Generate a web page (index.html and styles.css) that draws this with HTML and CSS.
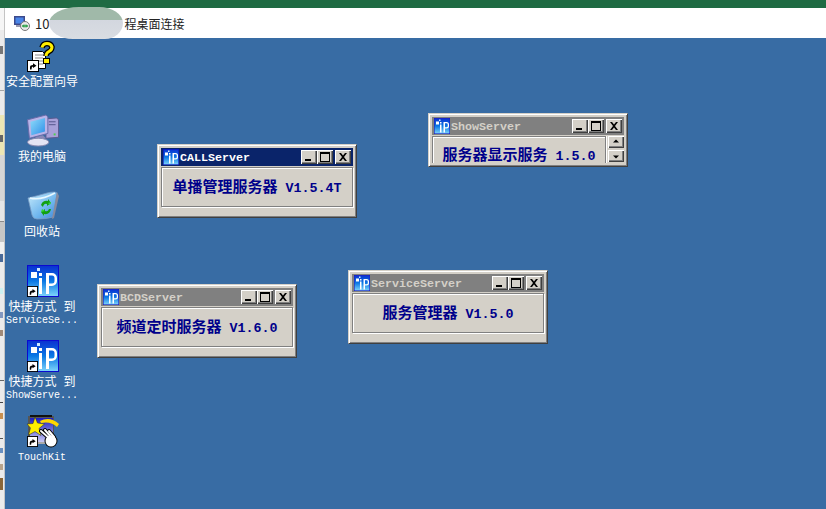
FILE: index.html
```html
<!DOCTYPE html>
<html lang="zh-CN">
<head>
<meta charset="utf-8">
<title>远程桌面连接</title>
<link rel="stylesheet" href="styles.css">
</head>
<body>
<svg class="defs" aria-hidden="true">
  <defs>
    <linearGradient id="ipg" x1="0" y1="0" x2="0" y2="1">
      <stop offset="0" stop-color="#0a30d0"/><stop offset=".5" stop-color="#0a78e4"/><stop offset="1" stop-color="#7fd6fb"/>
    </linearGradient>
    <linearGradient id="scr" x1="0" y1="0" x2="1" y2="1">
      <stop offset="0" stop-color="#8fdcfa"/><stop offset="1" stop-color="#2f8fe8"/>
    </linearGradient>
    <linearGradient id="bin" x1="0" y1="0" x2="1" y2="1">
      <stop offset="0" stop-color="#c9ecfb"/><stop offset=".6" stop-color="#6fb6ee"/><stop offset="1" stop-color="#3f86d6"/>
    </linearGradient>
    <linearGradient id="tk" x1="0" y1="0" x2="0" y2="1">
      <stop offset="0" stop-color="#1c1cc0"/><stop offset="1" stop-color="#c8c8f4"/>
    </linearGradient>
    <symbol id="ip" viewBox="0 0 32 32">
      <rect x=".5" y=".5" width="31" height="31" fill="url(#ipg)" stroke="#0a0ad0"/>
      <rect x="4" y="7" width="6" height="6" fill="#fff"/>
      <rect x="10" y="3" width="3" height="3" fill="#cfeaff"/>
      <rect x="12" y="8" width="3" height="3" fill="#fff"/>
      <rect x="12" y="13" width="3" height="16" fill="#fff"/>
      <path d="M19 8h6a5 5 0 0 1 5 5v3a5 5 0 0 1-5 5h-3v8h-3zM22 10.500v8h3a2.500 2.500 0 0 0 2.500-2.500v-3a2.500 2.500 0 0 0-2.500-2.500z" fill="#fff" fill-rule="evenodd"/>
    </symbol>
    <symbol id="lnk" viewBox="0 0 12 12">
      <rect x=".5" y=".5" width="11" height="11" fill="#fff" stroke="#000"/>
      <path d="M3 9.500 L3 7 Q3 5 6 5 L6 3.200 L9.500 5.800 L6 8 L6 6.600 Q4.500 6.600 4.500 9.500Z" fill="#000"/>
    </symbol>
  </defs>
</svg>

<header class="topstrip"></header>
<div class="main">
  <svg class="leftstrip" width="5" height="501" viewBox="0 0 5 501" aria-hidden="true">
    <rect width="5" height="501" fill="#ebebeb"/>
    <rect x="4" width="1" height="501" fill="#c4c4c4"/>
    <rect width="4" height="22" y="0" fill="#f6f6f6"/>
    <rect width="4" height="1" y="82" fill="#a6a6a6"/>
    <rect y="107" width="4" height="40" fill="#ece6b4"/>
    <rect y="147" width="4" height="46" fill="#d6d6d6"/>
    <rect y="193" width="4" height="20" fill="#e6e6e6"/>
    <rect y="213" width="4" height="1" fill="#8a8a8a"/>
    <rect y="214" width="4" height="20" fill="#c6c6c6"/>
    <rect y="234" width="4" height="12" fill="#f0f0f0"/>
    <rect y="246" width="3" height="8" fill="#4a6a98"/>
    <rect y="280" width="3" height="6" fill="#cdf0f0"/>
    <rect y="304" width="3" height="6" fill="#8298c0"/>
    <rect y="322" width="3" height="6" fill="#a08a78"/>
    <rect y="372" width="4" height="1" fill="#666"/>
    <rect y="394" width="3" height="1" fill="#444"/>
    <rect y="405" width="3" height="6" fill="#c89050"/>
    <rect y="430" width="3" height="1" fill="#555"/>
    <rect y="440" width="3" height="5" fill="#6a90c0"/>
    <rect y="456" width="3" height="6" fill="#b8a48c"/>
    <rect y="470" width="3" height="12" fill="#8a6638"/>
    <rect y="38" width="3" height="8" fill="#777"/>
    <rect y="127" width="3" height="7" fill="#666"/>
  </svg>
  <div class="session">
    <div class="titlebar">
      <svg class="appicon" viewBox="0 0 16 16" aria-hidden="true">
        <rect x="0" y="1" width="11" height="9" fill="#3c4a8c"/>
        <rect x="1.500" y="2.500" width="8" height="6" fill="#4a86e8"/>
        <rect x="2" y="10" width="8" height="2" fill="#9a9ab0"/>
        <circle cx="11" cy="11" r="4.500" fill="#e8e8e8" stroke="#777"/>
        <path d="M8.500 11h5" stroke="#1a9a3a" stroke-width="1.500"/>
        <path d="M10 9.500l-1.500 1.500 1.500 1.500M12 9.500l1.500 1.500-1.500 1.500" fill="none" stroke="#1a9a3a"/>
      </svg>
      <span class="host">10</span>
      <span class="apptitle">程桌面连接</span>
    </div>
    <main class="desktop">
      <ul class="icons">
        <li class="shortcut">
          <svg class="icon" viewBox="0 0 32 32" aria-hidden="true">
            <path d="M5.500 11.500h10l3 3v14h-13z" fill="#fff" stroke="#000"/>
            <path d="M8 15h8M8 18h8M8 21h8M8 24h8" stroke="#888"/>
            <path d="M15 7.500q1-4 5-4t5 3.500q0 3-3 4.500t-3 4.500" fill="none" stroke="#000" stroke-width="5.500"/>
            <path d="M15 7.500q1-4 5-4t5 3.500q0 3-3 4.500t-3 4.500" fill="none" stroke="#ffee00" stroke-width="3"/>
            <rect x="16.500" y="18.500" width="6" height="5" fill="#ffee00" stroke="#000"/>
            <use href="#lnk" x="0" y="20" width="12" height="12"/>
          </svg>
          <span class="label cjk">安全配置向导</span>
        </li>
        <li class="shortcut">
          <svg class="icon" viewBox="0 0 32 33" aria-hidden="true">
            <path d="M19 4l11-1 2 2v18l-13 1z" fill="#a8a0d8" stroke="#5a5a90"/>
            <path d="M22 7h7M22 10h7" stroke="#55558a"/>
            <rect x="27" y="19" width="2" height="2" fill="#4cd04c"/>
            <path d="M0 5L19 0l2 2v17L2 24z" fill="#b8b4e8" stroke="#6a6aa8"/>
            <path d="M3 7L18 3v14L4 21z" fill="url(#scr)"/>
            <path d="M8 23l8-2 3 3-10 3z" fill="#8888b8"/>
            <ellipse cx="11" cy="28" rx="11" ry="4" fill="#e4e4f4" stroke="#8888b0"/>
          </svg>
          <span class="label cjk">我的电脑</span>
        </li>
        <li class="shortcut">
          <svg class="icon" viewBox="0 0 32 32" aria-hidden="true">
            <path d="M1 8Q10 6 20 3q8-2 10 0L26 27q-6 2-16 2Q6 29 5 25z" fill="url(#bin)" stroke="#7a9cc4" stroke-width=".8"/>
            <path d="M30 2l2 4-5 22-2 1z" fill="#888a9c"/>
            <path d="M3 8q10 3 25-5" fill="none" stroke="#e8f8ff" stroke-width="1.500"/>
            <path d="M14 15q2-5 7-4l0-2 3 4-4 3v-2q-3-1-4 3z" fill="#12a012"/>
            <path d="M24 19q-1 6-7 5l0 2-3-4 4-3v2q3 1 4-2z" fill="#12a012"/>
            <path d="M15 19l-1 3 4-1zM23 15l1-3-3 1z" fill="#37d637"/>
          </svg>
          <span class="label cjk">回收站</span>
        </li>
        <li class="shortcut">
          <svg class="icon" viewBox="0 0 32 32" aria-hidden="true">
            <use href="#ip" width="32" height="32"/>
            <use href="#lnk" x="0" y="21" width="11" height="11"/>
          </svg>
          <span class="label cjk">快捷方式 到</span>
          <span class="label">ServiceSe...</span>
        </li>
        <li class="shortcut">
          <svg class="icon" viewBox="0 0 32 32" aria-hidden="true">
            <use href="#ip" width="32" height="32"/>
            <use href="#lnk" x="0" y="21" width="11" height="11"/>
          </svg>
          <span class="label cjk">快捷方式 到</span>
          <span class="label">ShowServe...</span>
        </li>
        <li class="shortcut">
          <svg class="icon" viewBox="0 0 32 32" aria-hidden="true">
            <rect x="1" y="1" width="26" height="27" fill="#555" />
            <rect x="3" y="0" width="22" height="2" fill="#111"/>
            <rect x="3" y="3" width="23" height="24" fill="url(#tk)"/>
            <path d="M3 27h24v2H3z" fill="#aaa"/>
            <path d="M8 2l2.500 6 7 1-5.500 4.500 2 7-6-4-6.500 3.500 2-7L0 9l6-.5z" fill="#ffee00" stroke="#222" stroke-width=".5"/>
            <path d="M13 6q10-5 19 3l-2 3q-6-6-16-4z" fill="#ffd800"/>
            <path d="M14 16l8 7M18 15l6 7M22 16l5 6" stroke="#000" stroke-width="4" stroke-linecap="round"/>
            <circle cx="24" cy="26" r="6.500" fill="#000"/>
            <path d="M14 16l8 7M18 15l6 7M22 16l5 6" stroke="#fff" stroke-width="2" stroke-linecap="round"/>
            <circle cx="24" cy="26" r="5.500" fill="#fff"/>
            <use href="#lnk" x="0" y="21" width="11" height="11"/>
          </svg>
          <span class="label">TouchKit</span>
        </li>
      </ul>

      <section class="win win-call">
        <div class="wtitle active">
          <svg class="wicon" aria-hidden="true"><use href="#ip" width="16" height="16"/></svg>
          <span class="wname">CALLServer</span>
          <div class="wbtns">
            <button class="wbtn"><svg viewBox="0 0 16 14"><rect x="4" y="9" width="6" height="2"/></svg></button>
            <button class="wbtn"><svg viewBox="0 0 16 14"><path d="M3 2h10v10H3zM4 4v7h8V4z" fill-rule="evenodd"/></svg></button>
            <button class="wbtn wclose"><svg viewBox="0 0 16 14"><path d="M4 3h2l2 2.500L10 3h2L9 7l3 4h-2L8 8.500 6 11H4l3-4z"/></svg></button>
          </div>
        </div>
        <div class="group"><p class="msg">单播管理服务器<span class="ver"> V1.5.4T</span></p></div>
      </section>

      <section class="win win-show">
        <div class="wtitle">
          <svg class="wicon" aria-hidden="true"><use href="#ip" width="16" height="16"/></svg>
          <span class="wname">ShowServer</span>
          <div class="wbtns">
            <button class="wbtn"><svg viewBox="0 0 16 14"><rect x="4" y="9" width="6" height="2"/></svg></button>
            <button class="wbtn"><svg viewBox="0 0 16 14"><path d="M3 2h10v10H3zM4 4v7h8V4z" fill-rule="evenodd"/></svg></button>
            <button class="wbtn wclose"><svg viewBox="0 0 16 14"><path d="M4 3h2l2 2.500L10 3h2L9 7l3 4h-2L8 8.500 6 11H4l3-4z"/></svg></button>
          </div>
        </div>
        <div class="showbody">
          <div class="group group-cut"><p class="msg">服务器显示服务<span class="ver"> 1.5.0</span></p></div>
          <div class="spin">
            <button class="wbtn sbtn"><svg viewBox="0 0 16 12"><path d="M8 3.500l3 3H5z"/></svg></button>
            <button class="wbtn sbtn"><svg viewBox="0 0 16 12"><path d="M5 5.500h6l-3 3z"/></svg></button>
          </div>
        </div>
      </section>

      <section class="win win-bcd">
        <div class="wtitle">
          <svg class="wicon" aria-hidden="true"><use href="#ip" width="16" height="16"/></svg>
          <span class="wname">BCDServer</span>
          <div class="wbtns">
            <button class="wbtn"><svg viewBox="0 0 16 14"><rect x="4" y="9" width="6" height="2"/></svg></button>
            <button class="wbtn"><svg viewBox="0 0 16 14"><path d="M3 2h10v10H3zM4 4v7h8V4z" fill-rule="evenodd"/></svg></button>
            <button class="wbtn wclose"><svg viewBox="0 0 16 14"><path d="M4 3h2l2 2.500L10 3h2L9 7l3 4h-2L8 8.500 6 11H4l3-4z"/></svg></button>
          </div>
        </div>
        <div class="group"><p class="msg">频道定时服务器<span class="ver"> V1.6.0</span></p></div>
      </section>

      <section class="win win-service">
        <div class="wtitle">
          <svg class="wicon" aria-hidden="true"><use href="#ip" width="16" height="16"/></svg>
          <span class="wname">ServiceServer</span>
          <div class="wbtns">
            <button class="wbtn"><svg viewBox="0 0 16 14"><rect x="4" y="9" width="6" height="2"/></svg></button>
            <button class="wbtn"><svg viewBox="0 0 16 14"><path d="M3 2h10v10H3zM4 4v7h8V4z" fill-rule="evenodd"/></svg></button>
            <button class="wbtn wclose"><svg viewBox="0 0 16 14"><path d="M4 3h2l2 2.500L10 3h2L9 7l3 4h-2L8 8.500 6 11H4l3-4z"/></svg></button>
          </div>
        </div>
        <div class="group"><p class="msg">服务管理器<span class="ver"> V1.5.0</span></p></div>
      </section>
    </main>
  </div>
</div>
<div class="blur" aria-hidden="true"></div>
</body>
</html>
```

FILE: styles.css
```css
* { box-sizing: border-box; }
html, body { margin: 0; padding: 0; }
body {
  width: 826px;
  height: 509px;
  overflow: hidden;
  display: flex;
  flex-direction: column;
  background: #ebebeb;
  font-family: "Noto Sans CJK SC", "Liberation Sans", sans-serif;
}
.defs { position: absolute; width: 0; height: 0; }
.topstrip { height: 8px; flex: none; background: #1f6b43; }
.main { flex: 1; display: flex; min-height: 0; }
.leftstrip { flex: none; display: block; }
.session { flex: 1; display: flex; flex-direction: column; min-width: 0; }
.titlebar {
  height: 30px;
  flex: none;
  background: #fff;
  display: flex;
  align-items: center;
  padding-left: 9px;
  font-size: 12px;
  color: #222;
}
.appicon { width: 16px; height: 16px; margin-right: 5px; }
.host { font-size: 13px; }
.apptitle { margin-left: 75px; }
.blur {
  position: absolute;
  left: 49px;
  top: 7px;
  width: 74px;
  height: 32px;
  border-radius: 30px 24px 18px 24px / 16px;
  background: linear-gradient(#a0b9a9 0, #a0b9a9 13px, #d3d7df 13px, #d9dde2 100%);
}
.desktop {
  flex: 1;
  position: relative;
  background: #386ca4;
  min-height: 0;
}
.icons {
  list-style: none;
  margin: 0;
  padding: 2px 0 0 1px;
  width: 75px;
}
.shortcut {
  height: 75px;
  display: flex;
  flex-direction: column;
  align-items: center;
}
.icon { width: 32px; height: 32px; flex: none; margin-bottom: 5px; overflow: visible; }
.label {
  color: #fff;
  font-family: "Liberation Mono", "Noto Sans CJK SC", monospace;
  font-size: 10px;
  line-height: 11px;
  margin-right: 2px;
  white-space: nowrap;
}
.label.cjk { font-size: 12px; font-weight: 400; line-height: 13px; }

.win {
  position: absolute;
  width: 200px;
  height: 74px;
  padding: 3px 3px 0;
  background: #d4d0c8;
  border-style: solid;
  border-width: 1px;
  border-color: #d4d0c8 #404040 #404040 #d4d0c8;
  box-shadow: inset 1px 1px 0 #fff, inset -1px -1px 0 #808080;
}
.win-call { left: 152px; top: 106px; }
.win-show { left: 423px; top: 75px; height: 54px; }
.win-bcd { left: 92px; top: 246px; }
.win-service { left: 343px; top: 232px; }

.wtitle {
  height: 18px;
  display: flex;
  align-items: center;
  padding-left: 2px;
  background: #808080;
  color: #d4d0c8;
}
.wtitle.active { background: #0a246a; color: #fff; }
.wicon { width: 16px; height: 16px; flex: none; margin-right: 1px; }
.wname {
  font-family: "Liberation Mono", monospace;
  font-weight: 700;
  font-size: 11.67px;
  padding-top: 1px;
  flex: 1;
}
.wbtns { display: flex; padding-right: 2px; }
.wbtn {
  width: 16px;
  height: 14px;
  padding: 0;
  margin: 0;
  border: 0;
  background: #d4d0c8;
  box-shadow: inset 1px 1px 0 #fff, inset -1px -1px 0 #404040, inset -2px -2px 0 #808080;
  display: block;
}
.wbtn svg { display: block; width: 100%; height: 100%; fill: #000; }
.wclose { margin-left: 2px; }

.group {
  margin-top: 1px;
  height: 40px;
  border: 1px solid #808080;
  box-shadow: inset 1px 1px 0 #fff, 1px 1px 0 #fff;
  display: flex;
  align-items: center;
  justify-content: center;
}
.msg {
  margin: 0;
  color: #00008b;
  font-family: "Noto Sans CJK SC", sans-serif;
  font-weight: 700;
  font-size: 15px;
  line-height: 18px;
  white-space: pre;
}
.ver {
  font-family: "Liberation Mono", monospace;
  font-size: 13.33px;
}
.showbody { display: flex; margin-top: 1px; }
.group-cut {
  margin-top: 0;
  width: 174px;
  height: 27px;
  border-bottom: 0;
  box-shadow: inset 1px 1px 0 #fff, 1px 0 0 #fff;
  padding-top: 10px;
}
.spin {
  margin-left: 2px;
  display: flex;
  flex-direction: column;
  gap: 2px;
}
.sbtn { height: 12px; }
```
